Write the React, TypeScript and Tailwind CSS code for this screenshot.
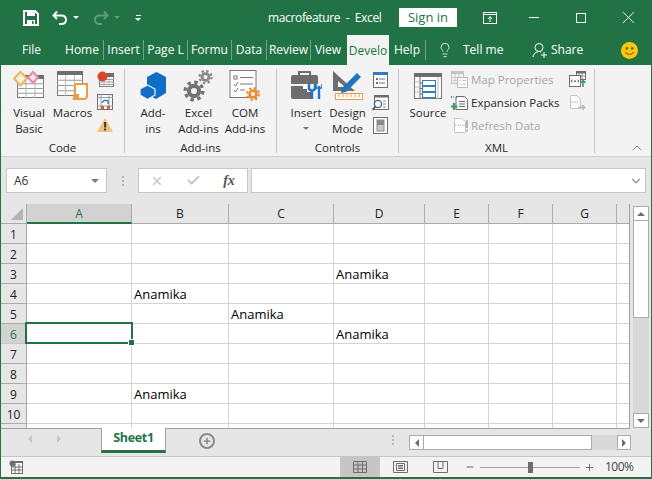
import { ChevronDown, ChevronUp, Lightbulb, Minus, Plus, X, Check } from 'lucide-react';

const GREEN = '#217346';

const COLUMNS = ['A', 'B', 'C', 'D', 'E', 'F', 'G', ''];
const CELLS: Record<string, string> = {
  'D3': 'Anamika',
  'B4': 'Anamika',
  'C5': 'Anamika',
  'D6': 'Anamika',
  'B9': 'Anamika',
};
const ROWS = ['1', '2', '3', '4', '5', '6', '7', '8', '9', '10', ''];

function Gear({ x, y, r, color = '#737373' }: { x: number; y: number; r: number; color?: string }) {
  const outer = r * 1.3;
  const tooth = (2 * Math.PI * outer) / 16;
  return (
    <g>
      <circle cx={x} cy={y} r={r * 0.75} fill="none" stroke={color} strokeWidth={r * 0.6} />
      <circle cx={x} cy={y} r={outer} fill="none" stroke={color} strokeWidth={r * 0.5} strokeDasharray={`${tooth} ${tooth}`} />
    </g>
  );
}

function Sheetlet({ x, y, w, h, bar = '#6d6d6d' }: { x: number; y: number; w: number; h: number; bar?: string }) {
  const lines = [];
  for (let i = 1; i < 4; i++) {
    lines.push(<line key={`h${i}`} x1={x} x2={x + w} y1={y + 4 + ((h - 4) * i) / 4} y2={y + 4 + ((h - 4) * i) / 4} stroke="#9a9a9a" strokeWidth="1" />);
  }
  for (let i = 1; i < 3; i++) {
    lines.push(<line key={`v${i}`} y1={y + 4} y2={y + h} x1={x + (w * i) / 3} x2={x + (w * i) / 3} stroke="#b5b5b5" strokeWidth="1" />);
  }
  return (
    <g>
      <rect x={x + 0.5} y={y + 0.5} width={w - 1} height={h - 1} fill="#fff" stroke="#7a7a7a" />
      {lines}
      <rect x={x} y={y} width={w} height={4} fill={bar} />
    </g>
  );
}

function VisualBasicIcon() {
  return (
    <svg width="32" height="32" viewBox="0 0 32 32">
      <Sheetlet x={4} y={5} w={27} h={23} />
      <path d="M7.5 2 L14 8.5 L7.5 15.5 L1 8.5 Z" fill="#fdf0d5" stroke="#e9b36d" strokeWidth="2" />
      <path d="M20 2 L25 7.5 L20 13 L15 7.5 Z" fill="#fde3ea" stroke="#e88aa3" strokeWidth="2" />
    </svg>
  );
}

function MacrosIcon() {
  return (
    <svg width="32" height="32" viewBox="0 0 32 32">
      <Sheetlet x={0} y={1} w={26} h={25} />
      <path d="M19 14 H30 V26 Q30 29 27 29 H16 Q18 28 18 25 V16 Q18 14 19 14 Z" fill="#fff" stroke="#ed9a45" strokeWidth="2" />
      <path d="M16 24 H22 V29 H16 Z" fill="#ed9a45" />
    </svg>
  );
}

function RecordIcon() {
  return (
    <svg width="17" height="17" viewBox="0 0 17 17">
      <Sheetlet x={2} y={2} w={15} h={14} />
      <circle cx="5.5" cy="5.5" r="5" fill="#d9472b" />
    </svg>
  );
}

function RelativeIcon() {
  return (
    <svg width="17" height="17" viewBox="0 0 17 17">
      <rect x="0.5" y="0.5" width="15" height="15" fill="#fff" stroke="#6d6d6d" />
      <path d="M0 3.5 H16 M0 12 H16 M4 0 V16 M12 0 V16" stroke="#9a9a9a" />
      <rect x="4" y="12" width="3" height="3" fill="#e3563a" />
      <rect x="10" y="12" width="3" height="3" fill="#e3563a" />
      <path d="M5 9 Q7 5 11 7 L11 10" fill="none" stroke="#2f7cc4" strokeWidth="1.4" />
    </svg>
  );
}

function WarningIcon() {
  return (
    <svg width="17" height="17" viewBox="0 0 17 17">
      <path d="M8 1 L16 15 H0 Z" fill="#f2c27e" />
      <rect x="7" y="5" width="2.2" height="5.5" fill="#444" />
      <rect x="7" y="11.5" width="2.2" height="2" fill="#444" />
    </svg>
  );
}

function AddInsIcon() {
  return (
    <svg width="32" height="32" viewBox="0 0 32 32">
      <path d="M19.5 2 L29 7 V23 L19 29 L10 24 V7 Z" fill="#0f6fc6" />
      <path d="M10.5 15 L18 19 V25 L10.5 29.5 L3 25 V19 Z" fill="#0f6fc6" stroke="#f3f3f3" strokeWidth="1.2" />
    </svg>
  );
}

function GearsIcon() {
  return (
    <svg width="32" height="32" viewBox="0 0 32 32">
      <Gear x={11} y={21} r={6.8} />
      <Gear x={22.5} y={7} r={4.6} color="#8a8a8a" />
    </svg>
  );
}

function ComIcon() {
  return (
    <svg width="32" height="32" viewBox="0 0 32 32">
      <rect x="1" y="0.5" width="26" height="27" fill="#fff" stroke="#7a7a7a" />
      <rect x="5" y="6" width="3" height="3" fill="none" stroke="#7a7a7a" />
      <path d="M11 7.5 H24 M11 14 H24 M11 20 H16 M5 14 L6.5 16 L9 12 M5 20 L6.5 22 L9 18" fill="none" stroke="#7a7a7a" />
      <Gear x={24} y={24} r={4.5} color="#ed8a2f" />
    </svg>
  );
}

function InsertIcon() {
  return (
    <svg width="32" height="32" viewBox="0 0 32 32">
      <path d="M9 5 V2 H20 V5" fill="none" stroke="#6d6d6d" strokeWidth="2" />
      <path d="M1 7 Q1 5 3 5 H26 Q28 5 28 7 V14 H1 Z" fill="#6d6d6d" />
      <path d="M1 16 H13 V19 H17 V22 H21 V29 H3 Q1 29 1 27 Z" fill="#6d6d6d" />
      <rect x="13" y="14" width="4" height="4" fill="#fff" />
      <path d="M22 29 V21 M19 14 V19 L22 21 L25 19 V14" fill="none" stroke="#1f75c4" strokeWidth="2.4" />
      <path d="M29 16 V29" stroke="#1f75c4" strokeWidth="2.4" />
      <path d="M26 14 V18 H32 V14" fill="none" stroke="#1f75c4" strokeWidth="1.6" />
    </svg>
  );
}

function DesignModeIcon() {
  return (
    <svg width="32" height="32" viewBox="0 0 32 32">
      <path fillRule="evenodd" d="M1 1 L23 21 H1 Z M6 11 V17 H13 Z" fill="#6d6d6d" />
      <path d="M10 18 L25 3 L29 7 L14 22 L9 23 Z" fill="#1f75c4" />
      <rect x="3.5" y="23.5" width="27" height="6" fill="#fff" stroke="#ed9a45" />
      <path d="M7 24 V27 M11 24 V27 M15 24 V27 M19 24 V27 M23 24 V27 M27 24 V27" stroke="#ed9a45" />
    </svg>
  );
}

function PropsIcon() {
  return (
    <svg width="17" height="17" viewBox="0 0 17 17">
      <rect x="1.5" y="1.5" width="14" height="15" fill="#fff" stroke="#6d6d6d" />
      <rect x="1" y="1" width="15" height="3" fill="#2f7cc4" />
      <path d="M7 8 H13 M7 12 H13" stroke="#6d6d6d" />
      <rect x="4" y="7" width="2" height="2" fill="#6d6d6d" />
      <rect x="4" y="11" width="2" height="2" fill="#6d6d6d" />
    </svg>
  );
}

function ViewCodeIcon() {
  return (
    <svg width="17" height="17" viewBox="0 0 17 17">
      <rect x="2.5" y="1.5" width="14" height="14" fill="#fff" stroke="#6d6d6d" />
      <rect x="2" y="1" width="15" height="2.5" fill="#6d6d6d" />
      <path d="M11 7 H14 M11 10 H14 M11 13 H14" stroke="#8a8a8a" />
      <circle cx="6" cy="10" r="3.6" fill="#fff" stroke="#3a6d94" strokeWidth="1.4" />
      <path d="M3.5 12.5 L0.5 16" stroke="#555" strokeWidth="1.8" />
    </svg>
  );
}

function RunDialogIcon() {
  return (
    <svg width="17" height="17" viewBox="0 0 17 17">
      <rect x="1.5" y="0.5" width="14" height="16" fill="#fff" stroke="#6d6d6d" />
      <rect x="5" y="3" width="7" height="11" fill="#c9c9c9" stroke="#8a8a8a" />
      <rect x="5" y="3" width="7" height="5" fill="#8a8a8a" />
    </svg>
  );
}

function SourceIcon() {
  return (
    <svg className="ml-[1px] mt-[2px]" width="32" height="32" viewBox="0 0 32 32">
      <rect x="1.5" y="1.5" width="27" height="25" fill="#fff" stroke="#7a7a7a" />
      <rect x="1" y="1" width="28" height="4" fill="#6d6d6d" />
      <path d="M7 5 V27 M7 11 H10 M7 16.5 H10 M7 22 H10" stroke="#6d6d6d" />
      <path d="M2 10 H6 M2 15 H6 M2 20 H6 M25 5 V27" stroke="#bbb" />
      <rect x="9.5" y="8.5" width="13" height="5" fill="#fff" stroke="#2f7cc4" />
      <rect x="9.5" y="14.5" width="13" height="5" fill="#fff" stroke="#2f7cc4" />
      <rect x="9.5" y="20.5" width="13" height="5" fill="#fff" stroke="#2f7cc4" />
    </svg>
  );
}

function MapPropsIcon() {
  return (
    <svg width="17" height="17" viewBox="0 0 17 17">
      <rect x="0.5" y="0.5" width="12" height="12" fill="#f3f3f3" stroke="#c4c4c4" />
      <rect x="0" y="0" width="13" height="3" fill="#c4c4c4" />
      <path d="M4 3 V13 M8 3 V13 M0 6.5 H13 M0 9.5 H13" stroke="#cfcfcf" />
      <rect x="6.5" y="6.5" width="10" height="10" fill="#fbfbfb" stroke="#bdbdbd" />
      <path d="M8.5 9.5 H10 M11.5 9.5 H15 M8.5 13 H10 M11.5 13 H15" stroke="#c4c4c4" />
    </svg>
  );
}

function XmlDoc({ tone = '#6d6d6d', dot = '#2f7cc4' }: { tone?: string; dot?: string }) {
  return (
    <>
      <path d="M3.5 1.5 H11 L14.5 5 V15.5 H3.5 Z" fill="#fff" stroke={tone} />
      <path d="M5 8.5 L3.5 7 M5 8.5 L3.5 10 M12 8.5 L13.5 7 M12 8.5 L13.5 10" stroke={tone} />
      <rect x="6.5" y="7.5" width="1.5" height="1.5" fill={dot} />
      <rect x="9" y="7.5" width="1.5" height="1.5" fill={dot} />
    </>
  );
}

function ExpansionIcon() {
  return (
    <svg width="17" height="17" viewBox="0 0 17 17">
      <path d="M5 2.5 H13.5 L16.5 5.5 V15.5 H5 Z" fill="#fff" stroke="#6d6d6d" />
      <path d="M8 7.5 H14 M8 10 H14 M8 12.5 H14" stroke="#6d6d6d" />
      <path d="M1 2 L0 3 L1 4 M5 2 L6 3 L5 4" fill="none" stroke="#2f7cc4" />
      <rect x="2" y="2.5" width="1" height="1" fill="#2f7cc4" />
      <path d="M3 9 V16 M0 12.5 H6.5" stroke="#3f9a78" strokeWidth="2.2" />
    </svg>
  );
}

function RefreshDataIcon() {
  return (
    <svg width="17" height="17" viewBox="0 0 17 17">
      <XmlDoc tone="#c4c4c4" dot="#bdbdbd" />
      <rect x="15" y="3" width="2" height="8" fill="#b5b5b5" />
      <rect x="15" y="12.5" width="2" height="2" fill="#b5b5b5" />
    </svg>
  );
}

function ImportIcon() {
  return (
    <svg width="17" height="17" viewBox="0 0 17 17">
      <rect x="7.5" y="0.5" width="9" height="8" fill="#fff" stroke="#6d6d6d" />
      <rect x="7" y="0" width="10" height="2.5" fill="#6d6d6d" />
      <path d="M10 2 V8 M13 2 V8 M7 5 H17" stroke="#8a8a8a" />
      <rect x="0.5" y="4.5" width="11" height="11" fill="#fff" stroke="#6d6d6d" />
      <path d="M3.5 9 L2 10 L3.5 11 M8.5 9 L10 10 L8.5 11" fill="none" stroke="#555" />
      <rect x="5" y="9.5" width="2" height="1.5" fill="#2f7cc4" />
      <path d="M14 16 V10 M11.5 12 L14 9.5 L16.5 12" fill="none" stroke="#3f9a78" strokeWidth="1.6" />
    </svg>
  );
}

function ExportIcon() {
  return (
    <svg width="17" height="17" viewBox="0 0 17 17">
      <path d="M1.5 1.5 H8 L11.5 5 V14.5 H1.5 Z" fill="#fbfbfb" stroke="#c4c4c4" />
      <path d="M3.5 7 L2.5 8 L3.5 9 M8 7 L9 8 L8 9" fill="none" stroke="#bdbdbd" />
      <rect x="5" y="7.5" width="1.5" height="1.5" fill="#bdbdbd" />
      <path d="M9 13.5 H16 M13 11 L16 13.5 L13 16" fill="none" stroke="#b5b5b5" strokeWidth="1.4" />
    </svg>
  );
}

function BigButton({ icon, lines, width, arrow }: { icon: React.ReactNode; lines: string[]; width: string; arrow?: boolean }) {
  return (
    <div className={`flex flex-col items-center ${width}`}>
      <div className="flex h-[35px] items-start justify-center">{icon}</div>
      {lines.map((l) => (
        <div key={l} className="whitespace-nowrap leading-4">{l}</div>
      ))}
      {arrow && <div className="mt-[6px] h-0 w-0 border-x-[3px] border-t-[3px] border-x-transparent border-t-[#777]" />}
    </div>
  );
}

function SmallColumn({ children, width }: { children: React.ReactNode; width: string }) {
  return <div className={`flex h-[69px] flex-col items-center justify-between ${width}`}>{children}</div>;
}

function SmallCell({ children }: { children: React.ReactNode }) {
  return <div className="flex h-[23px] items-center">{children}</div>;
}

function Group({ label, width, pad, children }: { label: string; width: string; pad: string; children: React.ReactNode }) {
  return (
    <div className={`flex h-[92px] flex-col border-r-0 ${width}`}>
      <div className={`flex h-[73px] items-start pt-[5px] ${pad}`}>{children}</div>
      <div className="flex h-[19px] items-center justify-center">{label}</div>
    </div>
  );
}

function GroupDivider() {
  return <div className="mt-[4px] h-[84px] w-px bg-[#c6c6c6]" />;
}

function Tab({ label, width }: { label: string; width: string }) {
  return (
    <div className={`flex h-[20px] items-center justify-center whitespace-nowrap border-r border-[#6ea58a] text-white ${width}`}>{label}</div>
  );
}

function TitleBar() {
  return (
    <div className="flex h-[35px] items-center text-white">
      <div className="ml-[22px] flex w-[245px] items-center">
        <svg width="16" height="16" viewBox="0 0 16 16">
          <path d="M1 1 H12 L15 4 V15 H1 Z" fill="none" stroke="#fff" strokeWidth="2" />
          <rect x="4" y="1" width="8" height="5" fill="#fff" />
          <rect x="4" y="10" width="8" height="5" fill="#fff" />
          <rect x="9" y="11" width="1.5" height="3" fill={GREEN} />
        </svg>
        <svg className="ml-[13px]" width="16" height="16" viewBox="0 0 16 16">
          <path d="M5 1.5 L1.5 5.5 L5 9 M2 5.5 H9 Q14 5.5 14 10 Q14 14 9 14 H7" fill="none" stroke="#fff" strokeWidth="1.9" />
        </svg>
        <div className="ml-[5px] h-0 w-0 border-x-[3px] border-t-[3px] border-x-transparent border-t-white" />
        <svg className="ml-[14px]" width="16" height="16" viewBox="0 0 16 16">
          <path d="M11 1.5 L14.5 5.5 L11 9 M14 5.5 H7 Q2 5.5 2 10 Q2 14 7 14 H9" fill="none" stroke="#5d9c7d" strokeWidth="1.9" />
        </svg>
        <div className="ml-[5px] h-0 w-0 border-x-[3px] border-t-[3px] border-x-transparent border-t-[#5d9c7d]" />
        <div className="ml-[15px] flex flex-col items-center gap-[2px]">
          <div className="h-px w-[5px] bg-white" />
          <div className="h-0 w-0 border-x-[3px] border-t-[3px] border-x-transparent border-t-white" />
        </div>
      </div>
      <div className="w-[131px] whitespace-pre text-[12px] tracking-[-0.35px]">macrofeature  -  Excel</div>
      <div className="flex h-[19px] w-[58px] items-center justify-center bg-white text-[13px] text-[#217346]">Sign in</div>
      <div className="ml-[26px] flex w-[14px] justify-center">
        <svg width="14" height="12" viewBox="0 0 14 12">
          <rect x="0.5" y="0.5" width="13" height="11" fill="none" stroke="#fff" />
          <path d="M0 2.5 H14 M7 10 V5 M5 7 L7 4.5 L9 7" fill="none" stroke="#fff" />
        </svg>
      </div>
      <div className="ml-[32px] h-px w-[10px] bg-white" />
      <div className="ml-[37px] h-[10px] w-[10px] border border-white" />
      <svg className="ml-[37px]" width="11" height="11" viewBox="0 0 11 11">
        <path d="M0 0 L11 11 M11 0 L0 11" stroke="#fff" />
      </svg>
    </div>
  );
}

function TabRow() {
  return (
    <div className="flex h-[30px] items-center text-white">
      <div className="ml-[21px] w-[39px]">File</div>
      <Tab label="Home" width="w-[43px]" />
      <Tab label="Insert" width="w-[40px]" />
      <Tab label="Page L" width="w-[44px]" />
      <Tab label="Formu" width="w-[44px]" />
      <Tab label="Data" width="w-[35px]" />
      <Tab label="Review" width="w-[44px]" />
      <div className="flex w-[36px] justify-center pr-[2px]">View</div>
      <div className="flex h-[30px] w-[42px] items-center justify-center self-end bg-[#f3f3f3] pt-[2px] text-[#217346]">Develo</div>
      <div className="flex h-[20px] w-[37px] items-center justify-center border-r border-[#6ea58a]">Help</div>
      <Lightbulb className="ml-[11px]" size={16} strokeWidth={1.2} />
      <div className="ml-[10px] w-[69px]">Tell me</div>
      <svg width="16" height="17" viewBox="0 0 16 17">
        <circle cx="7" cy="5.5" r="4" fill="none" stroke="#fff" />
        <path d="M1 15 Q2 10 6 10 M8 10 H9" fill="none" stroke="#fff" />
        <path d="M12 10 V16 M9 13 H15" stroke="#fff" />
      </svg>
      <div className="ml-[3px] w-[70px]">Share</div>
      <svg width="17" height="17" viewBox="0 0 16 16">
        <circle cx="8" cy="8" r="8" fill="#fcc80f" />
        <circle cx="5.5" cy="6" r="1.2" fill="#7a5a00" />
        <circle cx="10.5" cy="6" r="1.2" fill="#7a5a00" />
        <path d="M4 9.5 Q8 14 12 9.5" fill="none" stroke="#7a5a00" />
      </svg>
    </div>
  );
}

function Ribbon() {
  return (
    <div className="relative flex h-[92px] border-b border-[#d2d2d2] bg-[#f3f3f3] text-[11.5px] text-[#262626]">
      <Group label="Code" width="w-[123px]" pad="pl-[7px]">
        <BigButton icon={<VisualBasicIcon />} lines={['Visual', 'Basic']} width="w-[42px]" />
        <BigButton icon={<MacrosIcon />} lines={['Macros']} width="w-[45px]" />
        <SmallColumn width="w-[20px] -mt-[2px]">
          <SmallCell><RecordIcon /></SmallCell>
          <SmallCell><RelativeIcon /></SmallCell>
          <SmallCell><WarningIcon /></SmallCell>
        </SmallColumn>
      </Group>
      <GroupDivider />
      <Group label="Add-ins" width="w-[151px]" pad="pl-[6px]">
        <BigButton icon={<AddInsIcon />} lines={['Add-', 'ins']} width="w-[44px]" />
        <BigButton icon={<GearsIcon />} lines={['Excel', 'Add-ins']} width="w-[47px]" />
        <BigButton icon={<ComIcon />} lines={['COM', 'Add-ins']} width="w-[46px]" />
      </Group>
      <GroupDivider />
      <Group label="Controls" width="w-[121px]" pad="pl-[10px]">
        <BigButton icon={<InsertIcon />} lines={['Insert']} width="w-[38px]" arrow />
        <BigButton icon={<DesignModeIcon />} lines={['Design', 'Mode']} width="w-[45px]" />
        <SmallColumn width="w-[20px] -mt-[2px]">
          <SmallCell><PropsIcon /></SmallCell>
          <SmallCell><ViewCodeIcon /></SmallCell>
          <SmallCell><RunDialogIcon /></SmallCell>
        </SmallColumn>
      </Group>
      <GroupDivider />
      <Group label="XML" width="w-[195px]" pad="pl-[9px]">
        <BigButton icon={<SourceIcon />} lines={['Source']} width="w-[40px]" />
        <div className="-mt-[2px] ml-[3px] flex h-[69px] w-[116px] flex-col justify-between">
          <div className="flex h-[23px] items-center gap-[3px] text-[#a6a6a6]"><MapPropsIcon />Map Properties</div>
          <div className="flex h-[23px] items-center gap-[3px]"><ExpansionIcon />Expansion Packs</div>
          <div className="flex h-[23px] items-center gap-[3px] text-[#a6a6a6]"><RefreshDataIcon />Refresh Data</div>
        </div>
        <SmallColumn width="w-[20px] -mt-[2px]">
          <SmallCell><ImportIcon /></SmallCell>
          <SmallCell><ExportIcon /></SmallCell>
          <SmallCell><span className="block w-[17px]" /></SmallCell>
        </SmallColumn>
      </Group>
      <GroupDivider />
      <ChevronUp className="absolute bottom-0 right-[6px] text-[#555]" size={16} strokeWidth={1} />
    </div>
  );
}

function FormulaBar() {
  return (
    <div className="flex h-[47px] items-start bg-[#e6e6e6] pt-[11px]">
      <div className="ml-[5px] flex h-[25px] w-[101px] items-center justify-between border border-[#c6c6c6] bg-white pl-[7px] pr-[7px] text-[12px] text-[#333]">
        A6
        <div className="h-0 w-0 border-x-[4px] border-t-[4px] border-x-transparent border-t-[#7a7a7a]" />
      </div>
      <div className="ml-[14px] flex h-[25px] w-[3px] flex-col items-center justify-center gap-[2px]">
        <div className="h-[2px] w-[2px] bg-[#b5b5b5]" />
        <div className="h-[2px] w-[2px] bg-[#b5b5b5]" />
        <div className="h-[2px] w-[2px] bg-[#b5b5b5]" />
      </div>
      <div className="ml-[14px] flex h-[25px] w-[110px] items-center border border-[#c6c6c6] bg-white">
        <div className="flex w-[36px] justify-center"><X size={14} strokeWidth={2} className="text-[#c4c4c4]" /></div>
        <div className="flex w-[36px] justify-center"><Check size={15} strokeWidth={3} className="text-[#c4c4c4]" /></div>
        <div className="flex w-[36px] justify-center font-['Liberation_Serif',serif] text-[14px] font-bold italic text-[#555]">fx</div>
      </div>
      <div className="ml-[3px] flex h-[25px] w-[395px] items-center justify-end border border-[#c6c6c6] bg-white pr-[2px]">
        <ChevronDown size={14} strokeWidth={2.5} className="text-[#9a9a9a]" />
      </div>
    </div>
  );
}

function Sheet() {
  return (
    <div className="h-[225px] w-[629px] overflow-hidden border-b border-r border-[#9e9e9e]">
      <div className="grid grid-cols-[26px_105px_97px_105px_91px_64px_64px_64px_13px] grid-rows-[20px] auto-rows-[20px] text-[#222]">
        <div className="flex items-end justify-end border-b border-r border-[#ababab] bg-[#e6e6e6] pb-[3px] pr-[3px]">
          <div className="h-0 w-0 border-b-[12px] border-l-[12px] border-b-[#b4b4b4] border-l-transparent" />
        </div>
        {COLUMNS.map((c) =>
          c === 'A' ? (
            <div key="A" className="flex items-center justify-center border-b-2 border-r border-[#217346] border-r-[#ababab] bg-[#d2d2d2] pt-[1px] text-[12px] text-[#217346]">{c}</div>
          ) : (
            <div key={c || 'H'} className="flex items-center justify-center border-b border-r border-[#ababab] bg-[#e6e6e6] pt-[1px] text-[12px]">{c}</div>
          ),
        )}
        {ROWS.map((r) => (
          <Row key={r || 'end'} row={r} />
        ))}
      </div>
    </div>
  );
}

function Row({ row }: { row: string }) {
  const selected = row === '6';
  return (
    <>
      <div className={selected
        ? 'flex items-center justify-center border-b border-r border-[#c6c6c6] border-r-[#217346] bg-[#d2d2d2] pt-[2px] text-[12px] text-[#217346]'
        : 'flex items-center justify-center border-b border-r border-[#ababab] bg-[#e6e6e6] pt-[2px] text-[12px]'}
      >
        {row}
      </div>
      {COLUMNS.map((c) => {
        const text = CELLS[`${c}${row}`];
        const active = c === 'A' && selected;
        return (
          <div key={c || 'H'} className="relative flex items-center border-b border-r border-[#d4d4d4] bg-white pl-[2px] pt-[2px] text-[13px] text-black">
            {text}
            {active && (
              <div className="absolute -bottom-px -left-[2px] -right-[2px] -top-[2px] z-10 border-2 border-[#217346]">
                <div className="absolute -bottom-[4px] -right-[4px] h-[7px] w-[7px] border border-white bg-[#217346]" />
              </div>
            )}
          </div>
        );
      })}
    </>
  );
}

function ScrollButton({ dir, className }: { dir: 'up' | 'down' | 'left' | 'right'; className: string }) {
  const arrow = {
    up: 'border-x-[4px] border-b-[4px] border-x-transparent border-b-[#6d6d6d]',
    down: 'border-x-[4px] border-t-[4px] border-x-transparent border-t-[#6d6d6d]',
    left: 'border-y-[4px] border-r-[4px] border-y-transparent border-r-[#6d6d6d]',
    right: 'border-y-[4px] border-l-[4px] border-y-transparent border-l-[#6d6d6d]',
  }[dir];
  return (
    <div className={`flex items-center justify-center border border-[#ababab] bg-white ${className}`}>
      <div className={`h-0 w-0 ${arrow}`} />
    </div>
  );
}

function VerticalScroll() {
  return (
    <div className="ml-[3px] mt-[2px] flex h-[222px] w-[16px] flex-col">
      <ScrollButton dir="up" className="h-[15px]" />
      <div className="h-[97px] border border-t-0 border-[#ababab] bg-white" />
      <div className="flex-1 bg-[#d8d8d8]" />
      <ScrollButton dir="down" className="h-[15px]" />
    </div>
  );
}

function SheetTabs() {
  return (
    <div className="flex h-[28px] items-start border-b border-[#c6c6c6] bg-[#e6e6e6]">
      <div className="ml-[27px] mt-[6px] h-0 w-0 border-y-[4px] border-r-[4px] border-y-transparent border-r-[#c6c6c6]" />
      <div className="ml-[25px] mt-[6px] h-0 w-0 border-y-[4px] border-l-[4px] border-y-transparent border-l-[#c6c6c6]" />
      <div className="z-10 -mt-px ml-[40px] flex h-[25px] w-[65px] items-center justify-center border-x border-[#9e9e9e] border-b-[3px] border-b-[#217346] bg-white pb-[1px] text-[12.5px] font-bold tracking-[-0.3px] text-[#217346]">
        Sheet1
      </div>
      <div className="ml-[33px] mt-[4px] flex h-[16px] w-[16px] items-center justify-center rounded-full border-2 border-[#8a8a8a]">
        <Plus size={10} strokeWidth={3} className="text-[#7a7a7a]" />
      </div>
      <div className="ml-[177px] mt-[6px] flex flex-col gap-[2px]">
        <div className="h-[2px] w-[2px] bg-[#b5b5b5]" />
        <div className="h-[2px] w-[2px] bg-[#b5b5b5]" />
        <div className="h-[2px] w-[2px] bg-[#b5b5b5]" />
      </div>
      <div className="ml-[15px] mt-[6px] flex h-[15px] w-[222px]">
        <ScrollButton dir="left" className="w-[15px]" />
        <div className="w-[168px] border-y border-r border-[#ababab] bg-white" />
        <div className="flex-1 bg-[#d8d8d8]" />
        <ScrollButton dir="right" className="w-[14px]" />
      </div>
    </div>
  );
}

function StatusBar() {
  return (
    <div className="flex h-[20px] items-center bg-[#f3f3f3] text-[12px] text-[#444]">
      <svg className="ml-[8px]" width="14" height="14" viewBox="0 0 14 14">
        <rect x="2.5" y="2.5" width="11" height="11" fill="#fff" stroke="#6d6d6d" />
        <path d="M3 7 H13 M3 10 H13 M6 4 V13 M10 4 V13" stroke="#6d6d6d" />
        <rect x="6" y="1" width="8" height="2" fill="#6d6d6d" />
        <circle cx="3.5" cy="3.5" r="3" fill="#6d6d6d" />
      </svg>
      <div className="ml-[317px] flex h-[20px] w-[40px] items-center justify-center bg-[#c6c6c6]">
        <svg width="14" height="12" viewBox="0 0 14 12">
          <path d="M0.5 0.5 H13.5 V11.5 H0.5 Z M0.5 4 H13.5 M0.5 8 H13.5 M5 0.5 V11.5 M9.5 0.5 V11.5" fill="none" stroke="#6d6d6d" />
        </svg>
      </div>
      <svg className="ml-[13px]" width="15" height="12" viewBox="0 0 15 12">
        <path d="M0.5 0.5 H14.5 V11.5 H0.5 Z" fill="none" stroke="#6d6d6d" />
        <path d="M3.5 2.5 H11.5 V9.5 H3.5 Z M5 4.5 H10 M5 6 H10 M5 7.5 H10" fill="none" stroke="#6d6d6d" />
      </svg>
      <svg className="ml-[25px]" width="15" height="12" viewBox="0 0 15 12">
        <path d="M0.5 0.5 H14.5 V11.5 H0.5 Z M5 0.5 V7.5 H10 V0.5" fill="none" stroke="#6d6d6d" />
      </svg>
      <Minus className="ml-[17px]" size={10} strokeWidth={2} />
      <div className="ml-[5px] flex h-[11px] w-[100px] items-center justify-center bg-[linear-gradient(#a6a6a6,#a6a6a6)] bg-[length:100%_1px] bg-center bg-no-repeat">
        <div className="h-[11px] w-[5px] bg-[#6d6d6d]" />
      </div>
      <Plus className="ml-[4px]" size={11} strokeWidth={1.5} />
      <div className="ml-[10px] tracking-[-0.5px]">100%</div>
    </div>
  );
}

export default function App() {
  return (
    <div className="flex h-[479px] w-[652px] flex-col overflow-hidden border-x border-b-2 border-[#217346] bg-[#217346] font-['Open_Sans',sans-serif] text-[12px]">
      <TitleBar />
      <TabRow />
      <Ribbon />
      <FormulaBar />
      <div className="flex h-[225px] bg-[#e6e6e6]">
        <Sheet />
        <VerticalScroll />
      </div>
      <SheetTabs />
      <StatusBar />
    </div>
  );
}
